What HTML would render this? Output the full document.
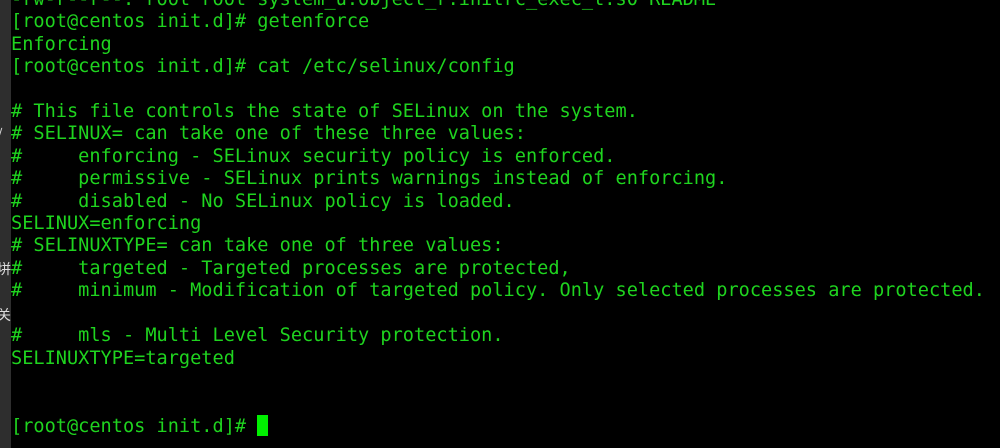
<!DOCTYPE html>
<html><head><meta charset="utf-8"><style>
html,body{margin:0;padding:0;background:#000;width:1000px;height:448px;overflow:hidden}
#strip{position:absolute;left:0;top:0;width:11px;height:448px;background:#2e2e2e;color:#ddd;font:14px "Noto Sans CJK SC",sans-serif;overflow:hidden}
#strip span{position:absolute;left:-3px}
pre{position:absolute;left:11px;top:-11px;margin:0;font-family:"DejaVu Sans Mono","Liberation Mono",monospace;font-size:18.6px;line-height:22.4px;color:#1fd41f;white-space:pre}
.cur{display:inline-block;width:11px;height:21px;background:#00f000;vertical-align:-4px}
</style></head><body>
<div id="strip"><span style="top:124px">/</span><span style="top:259px">垪</span><span style="top:305px">关</span></div>
<pre>-rw-r--r--. root root system_u:object_r:initrc_exec_t:s0 README
[root@centos init.d]# getenforce
Enforcing
[root@centos init.d]# cat /etc/selinux/config

# This file controls the state of SELinux on the system.
# SELINUX= can take one of these three values:
#     enforcing - SELinux security policy is enforced.
#     permissive - SELinux prints warnings instead of enforcing.
#     disabled - No SELinux policy is loaded.
SELINUX=enforcing
# SELINUXTYPE= can take one of three values:
#     targeted - Targeted processes are protected,
#     minimum - Modification of targeted policy. Only selected processes are protected.

#     mls - Multi Level Security protection.
SELINUXTYPE=targeted


[root@centos init.d]# <span class="cur"></span></pre>
</body></html>
